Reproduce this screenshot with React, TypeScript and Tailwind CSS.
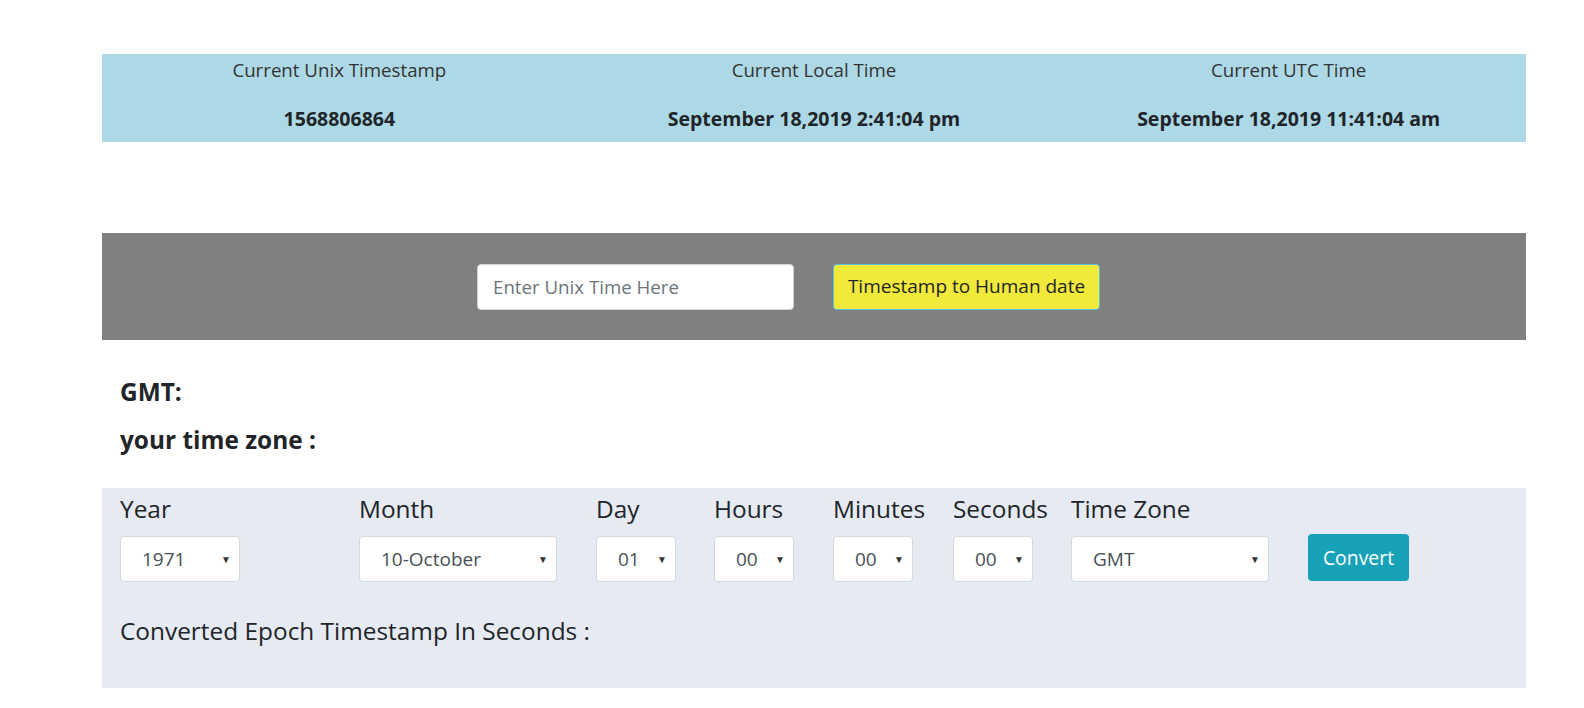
import React from "react";

const font = { fontFamily: '"Open Sans", "Noto Sans", sans-serif' };

const Select = ({ value, width }: { value: string; width: string }) => (
    <div
        className={`${width} h-[46px] bg-white border border-[#d4d8dd] rounded-[4px] flex items-center justify-between pl-[21px] pr-[8px] text-[19px] text-[#495057]`}
    >
        <span>{value}</span>
        <span className="text-[10px] text-[#333]">▼</span>
    </div>
);

const fields = [
    { label: "Year", value: "1971", col: "w-[239px]", sel: "w-[120px]" },
    { label: "Month", value: "10-October", col: "w-[237px]", sel: "w-[198px]" },
    { label: "Day", value: "01", col: "w-[118px]", sel: "w-[80px]" },
    { label: "Hours", value: "00", col: "w-[119px]", sel: "w-[80px]" },
    { label: "Minutes", value: "00", col: "w-[120px]", sel: "w-[80px]" },
    { label: "Seconds", value: "00", col: "w-[118px]", sel: "w-[80px]" },
    { label: "Time Zone", value: "GMT", col: "w-[237px]", sel: "w-[198px]" },
];

export default function App() {
    return (
        <div className="min-h-[708px] bg-white pt-[54px] pl-[102px] text-[#212529]" style={font}>
            {/* current time band */}
            <div className="w-[1424px] h-[88px] bg-[#add8e6] grid grid-cols-3 text-center">
                {[
                    ["Current Unix Timestamp", "1568806864"],
                    ["Current Local Time", "September 18,2019 2:41:04 pm"],
                    ["Current UTC Time", "September 18,2019 11:41:04 am"],
                ].map(([title, value]) => (
                    <div key={title} className="flex flex-col items-center pt-[4px]">
                        <p className="text-[18.7px] leading-[24px] text-[#333]">{title}</p>
                        <p className="mt-[25px] text-[19.5px] leading-[24px] font-bold">{value}</p>
                    </div>
                ))}
            </div>

            {/* timestamp to human */}
            <div className="mt-[91px] w-[1424px] h-[107px] bg-[#808080] flex items-center pl-[375px]">
                <input
                    type="text"
                    placeholder="Enter Unix Time Here"
                    className="w-[317px] h-[46px] bg-white rounded-[4px] border border-[#ced4da] px-[15px] text-[18.7px] placeholder:text-[#6c757d] focus:outline-none"
                />
                <button className="ml-[39px] w-[267px] h-[46px] bg-[#f2ea3b] rounded-[4px] border border-[#5bc0de] text-[19px] text-[#212529]">
                    Timestamp to Human date
                </button>
            </div>

            <div className="pl-[18px] pt-[40px] pb-[36px]">
                <h4 className="text-[24.4px] font-bold leading-[24px]">GMT:</h4>
                <h4 className="mt-[24px] text-[24.4px] font-bold leading-[24px]">your time zone :</h4>
            </div>

            {/* human to timestamp */}
            <div className="w-[1424px] h-[200px] bg-[#e6eaf2] pl-[18px] pt-[8px]">
                <div className="flex items-start">
                    {fields.map((f) => (
                        <div key={f.label} className={f.col}>
                            <label className="block text-[24.4px] leading-[26px] mb-[14px]">{f.label}</label>
                            <Select value={f.value} width={f.sel} />
                        </div>
                    ))}
                    <div className="pt-[38px]">
                        <button className="w-[101px] h-[47px] rounded-[4px] bg-[#17a2b8] text-white text-[19.4px]">
                            Convert
                        </button>
                    </div>
                </div>
                <p className="mt-[36px] text-[24.4px] leading-[26px]">Converted Epoch Timestamp In Seconds :</p>
            </div>
        </div>
    );
}
